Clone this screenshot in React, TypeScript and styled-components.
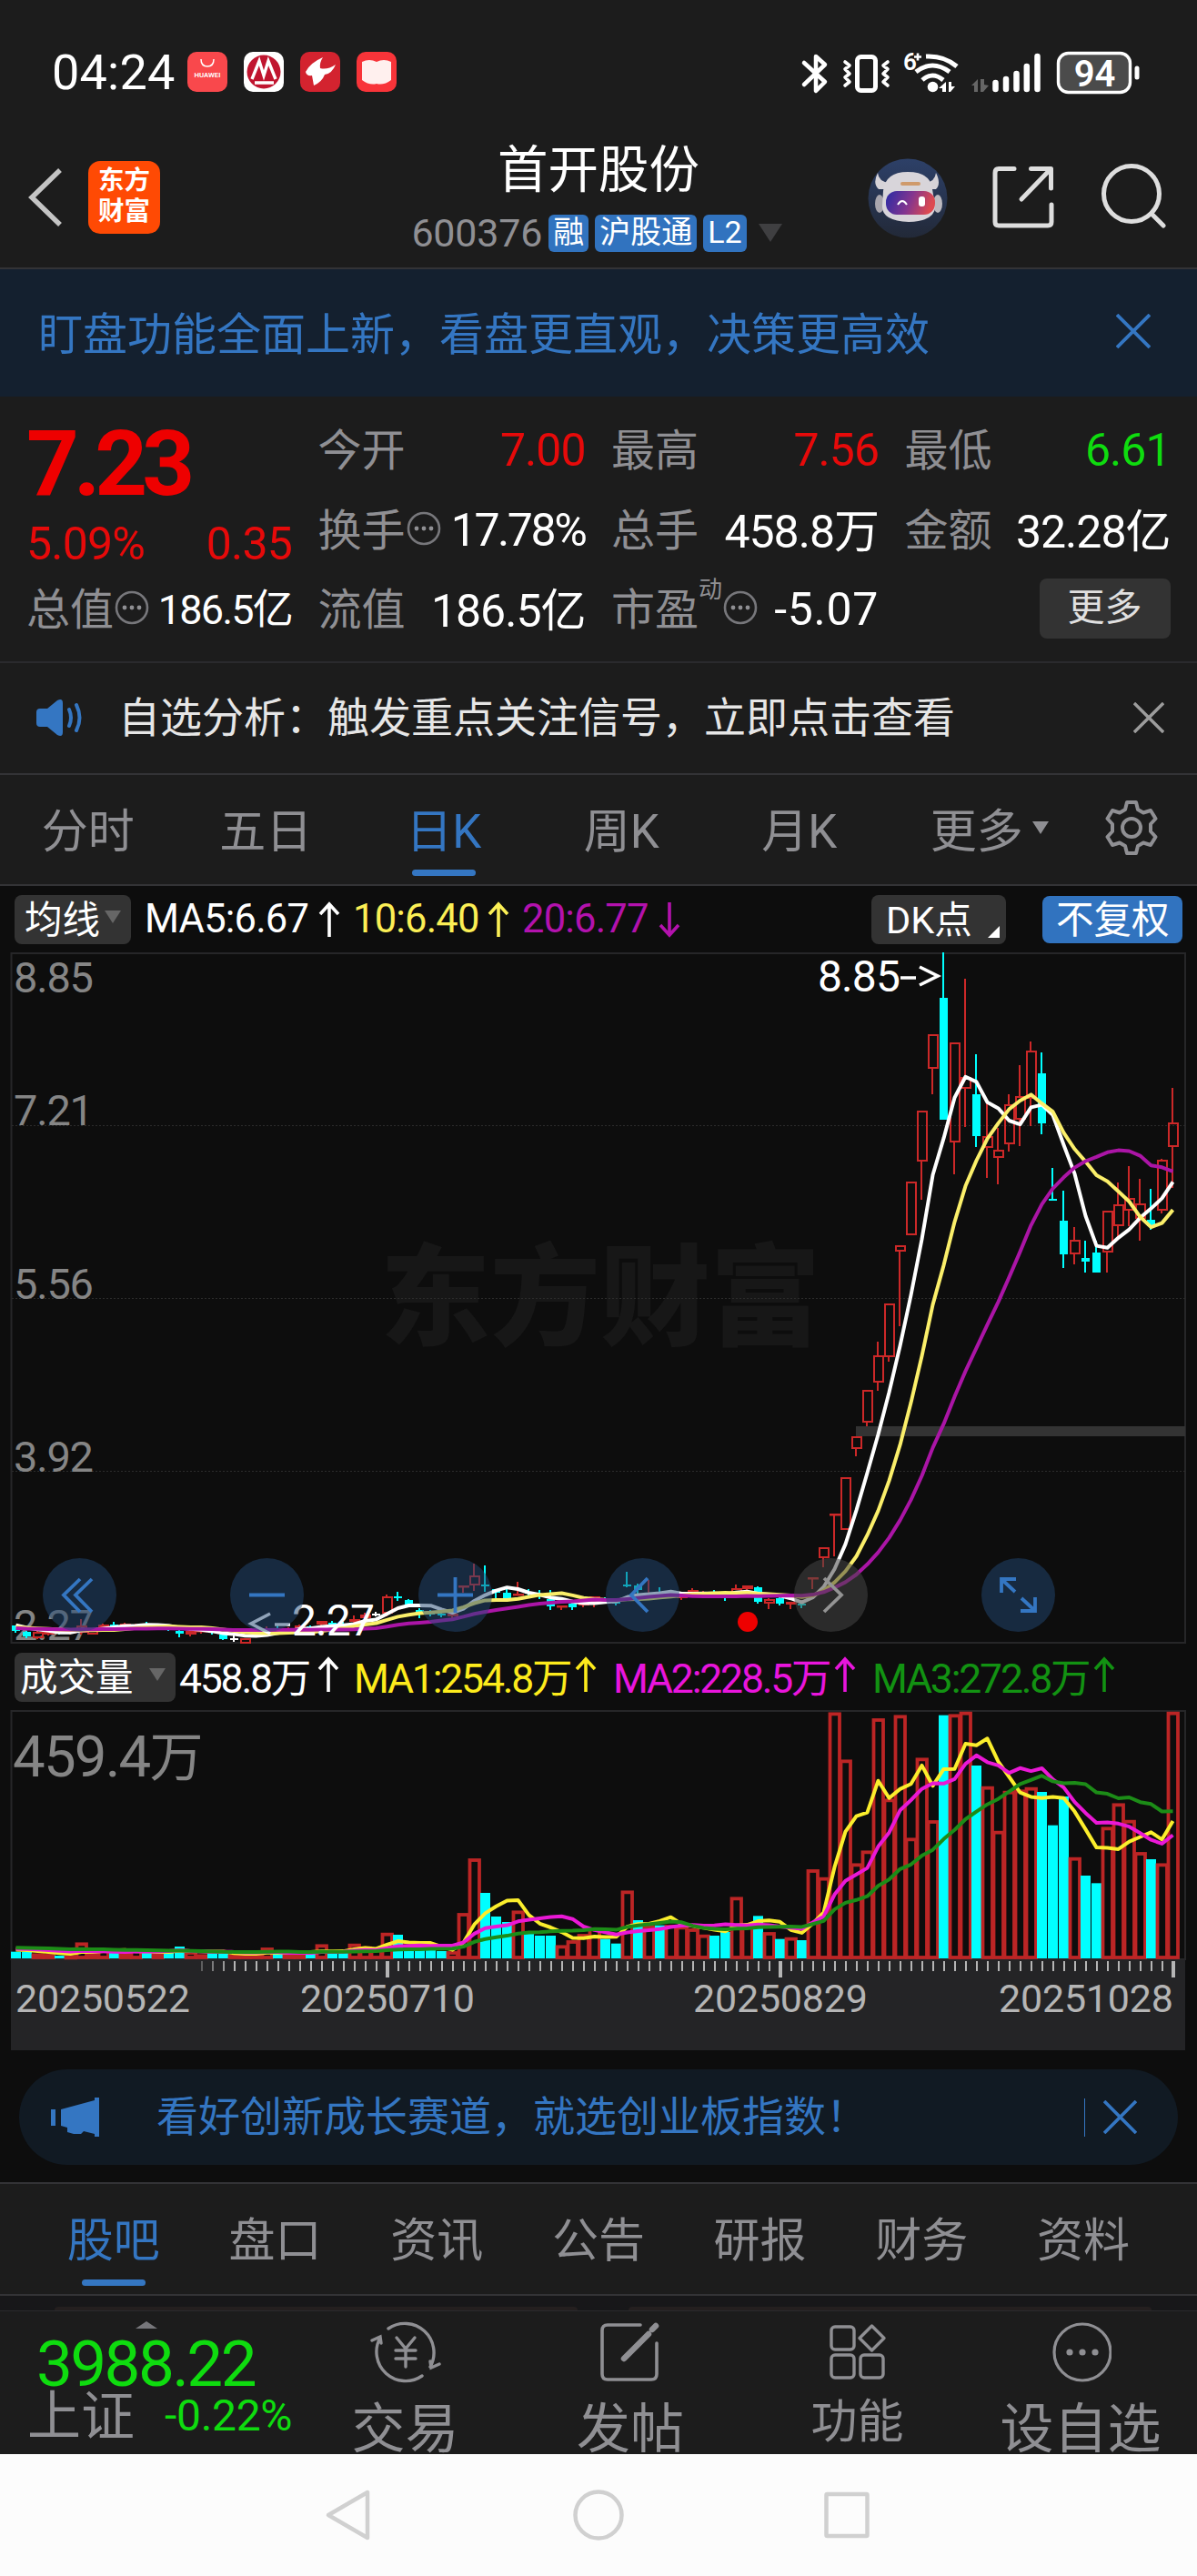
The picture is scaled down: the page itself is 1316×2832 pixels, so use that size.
import React from 'react'
import styled, { createGlobalStyle, css } from 'styled-components'

const GlobalStyle = createGlobalStyle`
  * { box-sizing: border-box; }
  body {
    margin: 0;
    background: #0d0d0d;
    font-family: Roboto, "Noto Sans CJK SC", sans-serif;
  }
  svg { display: block; flex: none; }
`;

const RED = '#e60a0a';
const GREEN = '#0fdc0f';
const BLUE = '#3476c2';
const GREY = '#8f8f93';

const Screen = styled.div`
  width: 1316px;
  height: 2832px;
  overflow: hidden;
  display: flex;
  flex-direction: column;
  background: #0d0d0d;
  white-space: nowrap;
  > * { flex: none; }
`;

/* status bar */

const StatusBar = styled.div`
  height: 158px;
  padding: 0 60px 0 57px;
  display: flex;
  align-items: center;
  background: #1c1c1c;
`;

const Clock = styled.div`
  width: 149px;
  padding-top: 2px;
  color: #fff;
  font-size: 54px;
  letter-spacing: 0.2px;
  line-height: 60px;
`;

const AppIcons = styled.div`
  display: flex;
  gap: 18px;
  flex: 1;
`;

const StatusIcons = styled.div`
  height: 46px;
`;

/* header */

const Header = styled.header`
  height: 138px;
  display: grid;
  grid-template-columns: 400px 1fr 400px;
  background: #1c1c1c;
  border-bottom: 2px solid #333336;
`;

const HeaderLeft = styled.div`
  display: flex;
  align-items: flex-start;
  padding: 19px 0 0 30px;
  gap: 27px;
`;

const Logo = styled.div`
  width: 79px;
  height: 80px;
  border-radius: 13px;
  background: #ff4a04;
  color: #fff;
  font-size: 28.5px;
  font-weight: 700;
  line-height: 34px;
  text-align: center;
  padding-top: 5px;
  white-space: normal;
`;

const HeaderTitle = styled.div`
  display: flex;
  flex-direction: column;
  align-items: center;
`;

const StockName = styled.div`
  height: 72px;
  line-height: 60px;
  font-size: 55.5px;
  color: #fff;
`;

const CodeRow = styled.div`
  display: flex;
  align-items: center;
  gap: 7px;
  height: 52px;
  padding-right: 4px;
`;

const Code = styled.span`
  font-size: 43px;
  letter-spacing: -0.2px;
  color: ${GREY};
`;

const Badge = styled.span`
  height: 41px;
  line-height: 38px;
  padding: 0 5px;
  border-radius: 6px;
  background: #3173bf;
  color: #fff;
  font-size: 34px;
`;

const Caret = styled.i<{ $size?: number; $color?: string; $up?: boolean }>`
  width: 0;
  height: 0;
  border: ${(p) => p.$size || 9}px solid transparent;
  ${(p) => p.$up
    ? css`align-self: center; border-top: 0; border-bottom: 8px solid ${p.$color || '#666'};`
    : css`border-bottom: 0; border-top: ${(p.$size || 9) * 1.6}px solid ${p.$color || '#666'};`}
`;

const CodeCaret = styled(Caret)`
  margin-left: 6px;
`;

const HeaderRight = styled.div`
  display: flex;
  align-items: flex-start;
  padding: 16px 0 0 38px;
`;

/* banners */

const Promo = styled.div`
  height: 140px;
  display: flex;
  align-items: center;
  justify-content: space-between;
  padding: 0 51px 5px 42px;
  background: #14202f;
  color: ${BLUE};
  font-size: 49px;
`;

const Notice = styled.div`
  height: 123px;
  display: flex;
  align-items: center;
  padding: 0 36px 1px 38px;
  background: #1c1c1c;
  border-bottom: 2px solid #333336;
  color: #e6e6e6;
  font-size: 46px;
`;

const NoticeText = styled.span`
  flex: 1;
  padding: 0 0 8px 38px;
`;

const IndexPromo = styled.div`
  height: 105px;
  margin: 21px 21px 19px;
  padding: 0 45px 0 34px;
  display: flex;
  align-items: center;
  border-radius: 53px;
  background: #111a23;
  color: ${BLUE};
  font-size: 46px;
`;

const IndexPromoText = styled.span`
  flex: 1;
  padding: 0 0 9px 61px;
`;

const Separator = styled.i`
  width: 1px;
  height: 42px;
  margin-right: 20px;
  background: ${BLUE};
`;

/* quote */

const Quote = styled.section`
  height: 293px;
  display: grid;
  grid-template-columns: 290px 292px 292px 290px;
  grid-template-rows: 88px 87px 87px;
  column-gap: 30.5px;
  padding: 15px 0 0 29px;
  background: #1c1c1c;
  border-bottom: 2px solid #2a2a2d;
`;

const PriceCell = styled.div`
  grid-row: span 2;
  display: flex;
  flex-direction: column;
`;

const Price = styled.div`
  height: 115px;
  line-height: 117px;
  font-size: 101px;
  font-weight: 700;
  letter-spacing: -6px;
  color: #ee0000;
`;

const Change = styled.div`
  display: flex;
  justify-content: space-between;
  margin-right: -2px;
  line-height: 65px;
  font-size: 50px;
  letter-spacing: -0.8px;
  color: ${RED};
`;

const Cell = styled.div`
  display: flex;
  align-items: center;
`;

const Label = styled.span`
  font-size: 48px;
  padding-bottom: 8px;
  color: ${GREY};
`;

const Value = styled.span<{ $color?: string; $size?: number; $spacing?: number; $unit?: boolean }>`
  margin: 0 -2px 0 auto;
  padding-bottom: ${(p) => (p.$unit ? 6 : 0)}px;
  font-size: ${(p) => p.$size || 50}px;
  letter-spacing: ${(p) => p.$spacing || -1}px;
  color: ${(p) => p.$color || '#fff'};
`;

const Sup = styled.sup`
  align-self: flex-start;
  font-size: 26px;
  line-height: 30px;
  padding-top: 7px;
  color: ${GREY};
`;

const MoreButton = styled.button`
  width: 144px;
  height: 66px;
  margin: 0 -2px 1px auto;
  padding: 0 0 3px;
  border: 0;
  border-radius: 8px;
  background: #333;
  color: #e0e0e0;
  font: inherit;
  font-size: 41px;
  line-height: 60px;
`;

/* period tabs */

const PeriodTabs = styled.nav`
  height: 122px;
  display: grid;
  grid-template-columns: repeat(6, 195.5px) 1fr;
  background: #1c1c1c;
  border-bottom: 2px solid #333336;
`;

const Tab = styled.div<{ $active?: boolean; $indent?: number }>`
  position: relative;
  display: flex;
  align-items: center;
  justify-content: center;
  gap: 10px;
  padding: 0 2px 5px ${(p) => p.$indent || 0}px;
  font-size: 51px;
  color: ${(p) => (p.$active ? BLUE : GREY)};
  ${(p) => p.$active && css`
    &::after {
      content: '';
      position: absolute;
      bottom: 9px;
      left: calc(50% - 36px);
      width: 70px;
      height: 7px;
      border-radius: 4px;
      background: ${BLUE};
    }
  `}
`;

/* indicators */

const IndicatorRow = styled.div`
  height: 73px;
  display: flex;
  align-items: center;
  padding: 0 16px;
`;

const Chip = styled.div<{ $width: number; $indent: number; $blue?: boolean }>`
  position: relative;
  width: ${(p) => p.$width}px;
  height: ${(p) => (p.$blue ? 52 : 54)}px;
  display: flex;
  align-items: center;
  justify-content: space-between;
  padding: 0 11px 6px ${(p) => p.$indent}px;
  border-radius: 8px;
  background: ${(p) => (p.$blue ? '#3173bf' : '#333')};
  color: #fff;
  font-size: 41.5px;
  ${(p) => p.$blue && css`margin-left: 40px;`}
`;

const Corner = styled.i`
  position: absolute;
  right: 7px;
  bottom: 7px;
  border-left: 13px solid transparent;
  border-bottom: 13px solid #fff;
`;

const Spacer = styled.div`
  flex: 1;
`;

const Reading = styled.div<{ $width: number; $color: string; $gap: number; $unit?: boolean }>`
  display: flex;
  align-items: center;
  justify-content: space-between;
  width: ${(p) => p.$width}px;
  margin-left: ${(p) => p.$gap}px;
  padding-bottom: ${(p) => (p.$unit ? 5 : 0)}px;
  color: ${(p) => p.$color};
  font-size: ${(p) => (p.$unit ? 44.5 : 43.5)}px;
  letter-spacing: ${(p) => (p.$unit ? -2.2 : -0.8)}px;
`;

/* charts */

const PriceChart = styled.div`
  position: relative;
  height: 760px;
`;

const ChartButton = styled.div<{ $index: number; $muted?: boolean }>`
  position: absolute;
  top: 666px;
  left: ${(p) => 47 + p.$index * 206.4}px;
  width: 81px;
  height: 81px;
  border-radius: 50%;
  background: ${(p) => (p.$muted ? 'rgba(70, 70, 70, 0.55)' : 'rgba(33, 72, 116, 0.5)')};
`;

const Axis = styled.div`
  margin: 0 13px 0 12px;
  height: 99px;
  background: #242426;
`;

const Dates = styled.div`
  display: flex;
  padding: 1px 14px 0 5px;
  color: #b5b5b5;
  font-size: 43px;
  line-height: 44px;
  letter-spacing: -0.2px;
`;

const DateLabel = styled.span<{ $gap?: number }>`
  width: 191px;
  margin-left: ${(p) => p.$gap || 0}px;
`;

/* bottom */

const SectionTabs = styled.nav`
  height: 125px;
  display: grid;
  grid-template-columns: repeat(7, 177.7px);
  padding: 0 37px;
  background: #1c1c1c;
  border-top: 2px solid #333336;
  border-bottom: 2px solid #333336;
`;

const CardStrip = styled.div`
  height: 16px;
  display: flex;
  justify-content: space-between;
  align-items: flex-end;
  padding: 0 50px 0 60px;
  background: #171719;
`;

const CardEdge = styled.div`
  width: 575px;
  height: 4px;
  border-radius: 12px 12px 0 0;
  background: #241f1f;
`;

const BottomBar = styled.footer`
  height: 158px;
  overflow: hidden;
  display: grid;
  grid-template-columns: 330px 231px 264px 235px 1fr;
  background: #1c1c1c;
  border-top: 1px solid #2a2a2d;
`;

const IndexQuote = styled.div`
  display: flex;
  flex-direction: column;
  padding: 11px 38px 0 30px;
`;

const IndexValue = styled.div`
  height: 75px;
  line-height: 77px;
  padding-left: 10px;
  font-size: 71px;
  letter-spacing: -2.6px;
  color: ${GREEN};
`;

const IndexChange = styled.div`
  display: flex;
  align-items: center;
  gap: 33px;
  height: 54px;
  margin-top: -7px;
  font-size: 48px;
  letter-spacing: -0.3px;
  color: ${GREEN};
`;

const IndexName = styled.span`
  padding-bottom: 7px;
  font-size: 59px;
  color: ${GREY};
  letter-spacing: 0;
`;

const Action = styled.div<{ $size?: number }>`
  display: flex;
  flex-direction: column;
  align-items: center;
  padding-top: 11px;
  font-size: ${(p) => p.$size || 59}px;
  line-height: ${(p) => (p.$size ? 86 : 101)}px;
  color: ${GREY};
`;

const NavBar = styled.div`
  height: 134px;
  background: #fcfcfc;
`;

/* icons */

const Cross = ({ size, color }: { size: number; color: string }): JSX.Element => (
  <svg width={size} height={size} viewBox="0 0 36 36" stroke={color} strokeWidth="3.6">
    <path d="M1 1L35 35M35 1L1 35" />
  </svg>
);

const Arrow = ({ down }: { down?: boolean }): JSX.Element => (
  <svg width="24" height="40" viewBox="0 0 24 40" fill="none" stroke="currentColor" strokeWidth="3.6">
    <path d={down ? 'M12 1V36M2 26L12 37L22 26' : 'M12 39V4M2 14L12 3L22 14'} />
  </svg>
);

const Dots = (): JSX.Element => (
  <svg width="40" height="44" viewBox="0 0 40 44" fill={GREY}>
    <circle cx="20" cy="20" r="17" fill="none" stroke="#77777b" strokeWidth="2.6" />
    <circle cx="12" cy="20" r="2.4" />
    <circle cx="20" cy="20" r="2.4" />
    <circle cx="28" cy="20" r="2.4" />
  </svg>
);

const StatusGlyphs = (): JSX.Element => (
  <svg width="376" height="50" viewBox="880 54 376 50" fill="none" stroke="#fff">
    <path d="M884 67L907 88L897 98V60L907 69L884 91" strokeWidth="4.5" strokeLinejoin="round" strokeLinecap="round" />
    <rect x="942.5" y="60.500" width="20" height="37" rx="4" strokeWidth="5" />
    <path d="M929 66l5 4l-5 4l5 5l-5 4l5 5l-5 4M976 66l-5 4l5 4l-5 5l5 4l-5 5l5 4" strokeWidth="3.6" strokeLinejoin="round" strokeLinecap="round" />
    <g strokeWidth="5">
      <path d="M1018 60Q1038 59 1052 71" />
      <path d="M1007 77Q1025 63 1044 77" />
      <path d="M1014 86Q1025 76 1037 86" />
    </g>
    <circle cx="1025.500" cy="93.500" r="5.800" fill="#fff" stroke="none" />
    <path d="M1032 95l8-7v11h-4v-4zM1050 93l-5 6h-2V88h3v5z" fill="#fff" stroke="none" />
    <path d="M1068 92l7-7v14h-4v-7zM1087 92l-6 7h-3V85h4v6z" fill="#666" stroke="none" />
    <g strokeWidth="6.5" strokeLinecap="round">
      <path d="M1094.500 89V96M1106 85V96M1117.500 79V96M1128.800 71V96M1140.500 60V96" />
    </g>
    <text x="993" y="75" fontSize="26" fontWeight="600" fill="#fff" stroke="none">6</text>
    <path d="M1005 60.500H1013M1009 56.500V64.500" strokeWidth="2.600" />
    <rect x="1163.500" y="56.500" width="79" height="43" rx="11" fill="#4b4b4b" strokeWidth="3.400" />
    <path d="M1250 73V83" strokeWidth="5" strokeLinecap="round" />
    <text x="1203.500" y="92.500" fontSize="40" fontWeight="600" fill="#fff" stroke="none" textAnchor="middle">94</text>
  </svg>
);

const Robot = (): JSX.Element => (
  <svg width="88" height="88" viewBox="0 0 88 88">
    <defs>
      <linearGradient id="sky" x1="0" y1="0" x2="0" y2="1">
        <stop offset="0" stopColor="#2d4068" />
        <stop offset="1" stopColor="#222938" />
      </linearGradient>
      <linearGradient id="visor" x1="0" y1="0" x2="1" y2="0.2">
        <stop offset="0" stopColor="#2a2ba5" />
        <stop offset="0.55" stopColor="#83358f" />
        <stop offset="1" stopColor="#dd4a50" />
      </linearGradient>
    </defs>
    <circle cx="44" cy="44" r="43.500" fill="url(#sky)" />
    <path d="M11 16Q5 28 12 34L21 34L24 27Q12 26 11 16ZM75 16Q81 28 75 34L67 34L63 27Q74 26 75 16Z" fill="#d6d3d8" />
    <ellipse cx="13" cy="50" rx="5" ry="10" fill="#a9a6ae" />
    <ellipse cx="77" cy="50" rx="5" ry="10" fill="#bdbac0" />
    <path d="M17 36Q19 15 44 15Q69 15 71 34L74 52Q75 69 45 70Q15 69 16 52Z" fill="#d8d5da" />
    <rect x="36" y="26" width="22" height="4" rx="2" fill="#cf9a6c" />
    <rect x="20" y="36" width="54" height="26" rx="12" fill="url(#visor)" />
    <path d="M33 51Q38 43 43 51" fill="none" stroke="#fff" strokeWidth="2" />
    <rect x="56" y="42" width="7" height="11" rx="3" fill="#fff" />
  </svg>
);

const Gear = (): JSX.Element => (
  <svg width="62" height="62" viewBox="0 0 62 62" fill="none" stroke={GREY} strokeWidth="4" strokeLinejoin="round">
    <path d="M26 3H36L38 11L44 14.500L52 12L57.500 21L52 27V35L57.500 41L52 50L44 47.500L38 51L36 59H26L24 51L18 47.500L10 50L4.500 41L10 35V27L4.500 21L10 12L18 14.500L24 11Z" />
    <circle cx="31" cy="31" r="10" />
  </svg>
);

/* chart data, in thirds of a pixel: direction, high, body top, body bottom, low */

type Candle = [string, number, number, number, number];

const quiet: Candle[] = [
  ['d', 320, 322, 340, 346], ['d', 338, 342, 358, 362], ['u', 340, 343, 362, 367], ['u', 335, 340, 350, 355],
  ['d', 328, 340, 345, 350], ['u', 340, 340, 346, 350], ['u', 300, 322, 346, 350], ['u', 330, 335, 350, 352],
  ['u', 315, 318, 330, 337], ['d', 308, 317, 321, 328], ['u', 312, 316, 320, 330], ['u', 315, 318, 322, 328],
  ['d', 308, 318, 322, 328], ['u', 318, 320, 326, 330], ['d', 320, 324, 334, 338], ['d', 330, 338, 348, 360],
  ['u', 335, 338, 352, 357], ['u', 335, 336, 340, 348], ['d', 338, 340, 346, 350], ['d', 345, 350, 366, 370],
  ['w', 350, 363, 367, 375], ['u', 362, 362, 380, 382], ['u', 340, 342, 348, 355], ['u', 325, 330, 336, 340],
  ['d', 318, 330, 334, 340], ['u', 328, 332, 336, 340], ['u', 318, 322, 335, 340], ['d', 320, 325, 335, 340],
  ['u', 305, 306, 318, 322], ['d', 305, 312, 318, 325], ['d', 310, 316, 322, 326], ['u', 288, 300, 308, 315],
  ['u', 280, 284, 298, 300], ['w', 275, 281, 286, 292], ['u', 220, 224, 282, 292], ['d', 210, 224, 228, 240],
  ['d', 234, 238, 254, 262], ['d', 265, 270, 285, 298], ['d', 270, 280, 284, 290], ['d', 275, 283, 288, 293],
  ['u', 280, 283, 290, 297], ['u', 190, 190, 195, 213], ['u', 118, 157, 190, 208], ['d', 123, 185, 190, 210],
  ['d', 200, 202, 213, 230], ['d', 200, 212, 230, 236], ['u', 177, 215, 220, 222], ['d', 200, 210, 215, 225],
  ['d', 205, 215, 222, 235], ['d', 205, 235, 258, 270], ['u', 255, 255, 262, 270], ['d', 240, 248, 260, 270],
  ['u', 235, 240, 255, 262], ['u', 225, 226, 246, 262], ['d', 228, 234, 238, 245], ['d', 235, 242, 246, 255],
  ['d', 145, 186, 190, 195], ['d', 183, 190, 205, 215], ['u', 170, 212, 218, 225], ['d', 196, 213, 218, 222],
  ['d', 215, 216, 222, 228], ['u', 218, 222, 230, 237], ['u', 197, 205, 215, 220], ['u', 208, 210, 216, 222],
  ['d', 203, 214, 220, 222], ['d', 218, 222, 232, 241], ['u', 186, 197, 212, 220], ['u', 190, 190, 202, 215],
  ['d', 192, 196, 244, 250], ['u', 232, 235, 250, 266], ['d', 228, 230, 248, 255],
];

const rally: Candle[] = [
  ['u', 2192, 2192, 2202, 2216], ['d', 2198, 2198, 2205, 2213], ['u', 2113, 2113, 2116, 2150], ['u', 2012, 2012, 2048, 2080],
  ['u', 1902, 1902, 1905, 2043], ['u', 1781, 1781, 1955, 1955], ['u', 1646, 1646, 1690, 1713], ['u', 1495, 1495, 1603, 1615],
  ['u', 1335, 1381, 1470, 1497], ['u', 1209, 1209, 1386, 1402], ['u', 1018, 1018, 1038, 1283], ['u', 806, 806, 985, 985],
  ['u', 573, 573, 741, 867], ['u', 321, 321, 434, 519], ['d', 51, 200, 602, 602], ['u', 348, 348, 677, 783],
  ['u', 138, 463, 501, 627], ['d', 387, 519, 657, 693], ['u', 550, 657, 696, 795], ['u', 630, 702, 729, 815],
  ['u', 519, 553, 683, 707], ['u', 423, 525, 604, 690], ['u', 346, 376, 535, 623], ['d', 381, 450, 615, 651],
  ['d', 762, 863, 869, 869], ['d', 836, 936, 1046, 1092], ['u', 957, 1000, 1047, 1080], ['d', 1003, 1058, 1070, 1106],
  ['d', 1003, 1040, 1106, 1106], ['u', 903, 903, 1041, 1106], ['u', 811, 882, 955, 990], ['u', 756, 861, 902, 953],
  ['u', 797, 880, 930, 1002], ['d', 831, 934, 955, 965], ['u', 733, 735, 903, 911], ['u', 499, 612, 693, 828],
];

const shift = (rows: Candle[], by: number): Candle[] =>
  rows.map(([dir, ...v]) => [dir, ...v.map((n) => Math.round((n + by) / 3))] as Candle);

const candles = [...shift(quiet, 1899), ...shift(rally, -51)];

const volumes = [
  25, 25, 20, 18, 12, 14, 56, 22, 32, 22, 22, 34, 22, 22, 22, 42, 27, 17, 20, 20, 17, 17, 17, 39, 20, 20, 20, 20, 50,
  22, 22, 52, 43, 35, 88, 81, 32, 34, 34, 27, 27, 153, 333, 219, 141, 123, 161, 85, 78, 78, 47, 63, 84, 105, 67, 52,
  227, 129, 112, 112, 114, 110, 102, 82, 78, 90, 206, 112, 143, 90, 67, 73, 63, 297, 271, 815, 659, 317, 359, 795,
  530, 806, 401, 665, 459, 805, 809, 817, 639, 571, 424, 556, 560, 568, 552, 442, 537, 337, 276, 251, 437, 515, 460,
  354, 330, 317, 817,
].map((v) => v / 3);

// days whose volume bar is red although the candle closed below its open
const redVolume = [51, 56, 60];

const xAt = (i: number): number => 17.5 + i * 12;

const average = (values: number[], days: number, before: number): string =>
  values.map((_, i) => {
    let sum = 0;
    for (let k = i - days + 1; k <= i; k++) sum += k < 0 ? before : values[k];
    return `${xAt(i)},${(sum / days).toFixed(1)}`;
  }).join(' ');

const closes = candles.map(([dir, , top, bottom]) => (dir === 'd' ? bottom : top));
const volumeTops = volumes.map((v) => 274 - v);

const Line = ({ points, color }: { points: string; color: string }): JSX.Element => (
  <polyline points={points} fill="none" stroke={color} strokeWidth="4" strokeLinejoin="round" />
);

const CandleChart = (): JSX.Element => (
  <svg width="1316" height="760" viewBox="0 0 1316 760">
    <text x="660" y="422" fontSize="121" fontWeight="900" fill="#171717" textAnchor="middle">东方财富</text>
    <path d="M12.500 1H1303V759H12.500Z" fill="none" stroke="#262628" strokeWidth="2" />
    {[190, 380, 570].map((y) => (
      <path key={y} d={`M13 ${y + 0.5}H1303`} stroke="#2c2c2c" strokeDasharray="2 2" />
    ))}
    <rect x="941" y="521" width="362" height="11" fill="#333" />
    <g fontSize="47" fill="#858585" letterSpacing="-1.2">
      <text x="15" y="44">8.85</text>
      <text x="15" y="190">7.21</text>
      <text x="15" y="381">5.56</text>
      <text x="15" y="571">3.92</text>
      <text x="15" y="756">2.27</text>
    </g>
    {candles.map(([dir, high, top, bottom, low], i) => {
      const x = xAt(i);
      if (dir === 'u') {
        return (
          <g key={i} fill="none" stroke="#cc2828" strokeWidth="2">
            <path d={`M${x - 0.5} ${high}V${top}M${x - 0.5} ${bottom}V${low}`} />
            <rect x={x - 4.5} y={top + 1} width="10" height={Math.max(bottom - top - 2, 0.5)} />
          </g>
        );
      }
      const color = dir === 'w' ? '#fff' : '#00ffff';
      return (
        <g key={i}>
          <path d={`M${x - 0.5} ${high}V${low}`} stroke={color} strokeWidth="2" />
          <rect x={x - 4.5} y={top} width="9" height={Math.max(bottom - top, 2)} fill={color} />
        </g>
      );
    })}
    <Line points={average(closes, 5, 738)} color="#fff" />
    <Line points={average(closes, 10, 741)} color="#fbef6a" />
    <Line points={average(closes, 20, 743)} color="#ab15a6" />
    <g fontSize="48" fill="#fff" letterSpacing="-0.9">
      <text x="899" y="43">8.85</text>
      <text x="321" y="751">2.27</text>
    </g>
    <g fill="none" stroke="#fff" strokeWidth="3.6">
      <path d="M990 28H1007M1011 16L1031 26L1011 36" />
      <path d="M319 739H302M297 727L276 738L297 749" />
    </g>
    <circle cx="822" cy="736" r="11" fill="#ee0000" />
  </svg>
);

const VolumeChart = (): JSX.Element => (
  <svg width="1316" height="275" viewBox="0 0 1316 275">
    <path d="M12.500 1H1303V274H12.500Z" fill="none" stroke="#262628" strokeWidth="2" />
    <text x="14" y="73" fontSize="63.500" fill="#858585" letterSpacing="-1.800">459.4<tspan fontSize="59">万</tspan></text>
    {volumes.map((v, i) => (
      candles[i][0] !== 'd' || redVolume.includes(i)
        ? <rect key={i} x={xAt(i) - 5} y={276 - v} width="10.5" height={Math.max(v - 4, 1)} fill="none" stroke="#bc2525" strokeWidth="3.8" />
        : <rect key={i} x={xAt(i) - 5.5} y={274 - v} width="11" height={v - 1} fill="#00ffff" />
    ))}
    <Line points={average(volumeTops, 5, 263)} color="#fbee2c" />
    <Line points={average(volumeTops, 10, 262)} color="#ea18d6" />
    <Line points={average(volumeTops, 20, 261)} color="#1c8c17" />
  </svg>
);

const Ticks = (): JSX.Element => (
  <svg width="1291" height="19" viewBox="12 0 1291 19" stroke="#b5b5b5">
    {volumes.map((_, i) => {
      const major = i === 34 || i === 70 || i === 106;
      return i > 16 && (
        <path key={i} d={`M${xAt(i) + 0.5} 1V${major ? 19 : 12}`} strokeWidth={major ? 4 : 2} opacity={Math.min(1, (i - 15) / 5)} />
      );
    })}
  </svg>
);

const buttonPaths = [
  'M41 23L23 40.500L41 59M54 23L36 40.500L54 59',
  'M21 40.500H60',
  'M21 40.500H60M40.500 21V60',
  'M46 22L28 40.500L46 59',
  'M33 22L52 40.500L33 59',
  'M22 38V23H38M23 24L37 37M59 43V58H43M58 57L44 44',
];

const sections = ['股吧', '盘口', '资讯', '公告', '研报', '财务', '资料'];

const App = (): JSX.Element => (
  <Screen>
    <GlobalStyle />
    <StatusBar>
      <Clock>04:24</Clock>
      <AppIcons>
        <svg width="44" height="44" viewBox="0 0 44 44">
          <rect width="44" height="44" rx="10" fill="#f9484c" />
          <path d="M15 8Q15 16 22 16Q29 16 29 8" fill="none" stroke="#fff" strokeWidth="1.500" />
          <text x="22" y="28" fontSize="7.800" fontWeight="600" fill="#fff" textAnchor="middle">HUAWEI</text>
        </svg>
        <svg width="44" height="44" viewBox="0 0 44 44" fill="none">
          <rect width="44" height="44" rx="10" fill="#fff" />
          <circle cx="22" cy="22" r="18.500" fill="#c0152f" />
          <path d="M9 30L17 10L22 26L27 10L35 30M12 34H33" stroke="#fff" strokeWidth="3.400" />
        </svg>
        <svg width="44" height="44" viewBox="0 0 44 44">
          <rect width="44" height="44" rx="10" fill="#d3232f" />
          <path d="M25 6Q11 12 6 22Q7 27 13 26L15 37Q24 33 27 25Q35 24 39 14Q30 20 22 18Q21 12 25 6Z" fill="#fff" />
        </svg>
        <svg width="44" height="44" viewBox="0 0 44 44">
          <rect width="44" height="44" rx="10" fill="#f83439" />
          <path d="M6 11Q14 7 22 11Q30 7 38 11V31Q30 37 22 35Q14 37 6 31Z" fill="#fff0ee" />
        </svg>
      </AppIcons>
      <StatusIcons><StatusGlyphs /></StatusIcons>
    </StatusBar>

    <Header>
      <HeaderLeft>
        <svg width="40" height="80" viewBox="0 0 40 80" fill="none" stroke="#c4c4c4" strokeWidth="5.500">
          <path d="M36 10L5 40L36 70" />
        </svg>
        <Logo>东方<br />财富</Logo>
      </HeaderLeft>
      <HeaderTitle>
        <StockName>首开股份</StockName>
        <CodeRow>
          <Code>600376</Code>
          <Badge>融</Badge>
          <Badge>沪股通</Badge>
          <Badge>L2</Badge>
          <CodeCaret $size={13} $color="#3f3f41" />
        </CodeRow>
      </HeaderTitle>
      <HeaderRight>
        <Robot />
        <svg width="250" height="88" viewBox="1042 174 250 88" fill="none" stroke="#dedede" strokeWidth="5" strokeLinecap="round" strokeLinejoin="round">
          <path d="M1115 185.500H1098Q1094 185.500 1094 190V244Q1094 248 1098 248H1152Q1156 248 1156 244V225M1133.500 185.500H1155.500V207M1153 188L1123 219" />
          <circle cx="1244" cy="213" r="30.500" />
          <path d="M1266 235L1279 248" />
        </svg>
      </HeaderRight>
    </Header>

    <Promo>
      <span>盯盘功能全面上新，看盘更直观，决策更高效</span>
      <Cross size={38} color={BLUE} />
    </Promo>

    <Quote>
      <PriceCell>
        <Price>7.23</Price>
        <Change><span>5.09%</span><span>0.35</span></Change>
      </PriceCell>
      <Cell><Label>今开</Label><Value $color={RED}>7.00</Value></Cell>
      <Cell><Label>最高</Label><Value $color={RED}>7.56</Value></Cell>
      <Cell><Label>最低</Label><Value $color={GREEN}>6.61</Value></Cell>
      <Cell><Label>换手</Label><Dots /><Value $spacing={-2.4}>17.78%</Value></Cell>
      <Cell><Label>总手</Label><Value $unit>458.8万</Value></Cell>
      <Cell><Label>金额</Label><Value $unit>32.28亿</Value></Cell>
      <Cell><Label>总值</Label><Dots /><Value $unit $size={45} $spacing={-1.8}>186.5亿</Value></Cell>
      <Cell><Label>流值</Label><Value $unit>186.5亿</Value></Cell>
      <Cell><Label>市盈</Label><Sup>动</Sup><Dots /><Value $spacing={0.7}>-5.07</Value></Cell>
      <Cell><MoreButton>更多</MoreButton></Cell>
    </Quote>

    <Notice>
      <svg width="54" height="44" viewBox="0 0 54 44" fill="none" stroke={BLUE} strokeWidth="4" strokeLinecap="round">
        <path d="M6 12H14L25 3Q31 0 31 6V38Q31 44 25 41L14 32H6Q2 32 2 28V16Q2 12 6 12Z" fill={BLUE} stroke="none" />
        <path d="M38 13Q42 22 38 31M46 8Q53 22 46 36" />
      </svg>
      <NoticeText>自选分析：触发重点关注信号，立即点击查看</NoticeText>
      <Cross size={34} color="#9c9c9c" />
    </Notice>

    <PeriodTabs>
      <Tab>分时</Tab>
      <Tab>五日</Tab>
      <Tab $active>日K</Tab>
      <Tab>周K</Tab>
      <Tab>月K</Tab>
      <Tab $indent={27}>更多<Caret $color={GREY} /></Tab>
      <Tab><Gear /></Tab>
    </PeriodTabs>

    <IndicatorRow>
      <Chip $width={128} $indent={11}>均线<Caret /></Chip>
      <Reading $width={215} $gap={15} $color="#fff">MA5:6.67<Arrow /></Reading>
      <Reading $width={172} $gap={14} $color="#fbef55">10:6.40<Arrow /></Reading>
      <Reading $width={174} $gap={14} $color="#b312ad">20:6.77<Arrow down /></Reading>
      <Spacer />
      <Chip $width={148} $indent={16}>DK点<Corner /></Chip>
      <Chip $width={154} $indent={15} $blue>不复权</Chip>
    </IndicatorRow>

    <PriceChart>
      <CandleChart />
      {buttonPaths.map((d, i) => (
        <ChartButton key={i} $index={i} $muted={i === 4}>
          <svg width="81" height="81" viewBox="0 0 81 81" fill="none" stroke={i === 4 ? '#939393' : BLUE} strokeWidth="3.8">
            <path d={d} />
          </svg>
        </ChartButton>
      ))}
    </PriceChart>

    <IndicatorRow>
      <Chip $width={177} $indent={6}>成交量<Caret /></Chip>
      <Reading $width={176} $gap={4} $unit $color="#fff">458.8万<Arrow /></Reading>
      <Reading $width={267} $gap={16} $unit $color="#fdeb1c">MA1:254.8万<Arrow /></Reading>
      <Reading $width={267} $gap={18} $unit $color="#e815dc">MA2:228.5万<Arrow /></Reading>
      <Reading $width={267} $gap={18} $unit $color="#129212">MA3:272.8万<Arrow /></Reading>
    </IndicatorRow>

    <VolumeChart />
    <Axis>
      <Ticks />
      <Dates>
        <DateLabel>20250522</DateLabel>
        <DateLabel $gap={122}>20250710</DateLabel>
        <DateLabel $gap={241}>20250829</DateLabel>
        <DateLabel $gap={145}>20251028</DateLabel>
      </Dates>
    </Axis>

    <IndexPromo>
      <svg width="56" height="46" viewBox="0 0 56 44" fill={BLUE}>
        <path d="M1 13H6V31H1ZM12 13L49 3V0H54V43H49V40L37 37L34 40H26L19 38V33L12 31Z" />
      </svg>
      <IndexPromoText>看好创新成长赛道，就选创业板指数！</IndexPromoText>
      <Separator />
      <Cross size={37} color={BLUE} />
    </IndexPromo>

    <SectionTabs>
      {sections.map((name, i) => <Tab key={name} $active={i === 0}>{name}</Tab>)}
    </SectionTabs>
    <CardStrip><CardEdge /><CardEdge /></CardStrip>

    <BottomBar>
      <IndexQuote>
        <Caret $up $size={12} $color="#77777b" />
        <IndexValue>3988.22</IndexValue>
        <IndexChange><IndexName>上证</IndexName>-0.22%</IndexChange>
      </IndexQuote>
      <Action>
        <svg width="78" height="68" viewBox="0 0 78 68" fill="none" stroke={GREY} strokeWidth="3.4" strokeLinecap="round">
          <path d="M20 8A32 32 0 0 1 66 50M57 60A32 32 0 0 1 11 18M2 21L11 17L12 24M76 47L67 51L66 44" />
          <path d="M29 18L39 30L49 18M39 30V50M28 32H50M28 41H50" />
        </svg>
        交易
      </Action>
      <Action>
        <svg width="68" height="68" viewBox="0 0 68 68" fill="none" stroke={GREY} strokeWidth="3.6" strokeLinecap="round">
          <path d="M45 4H9Q3 4 3 10V58Q3 64 9 64H57Q63 64 63 58V24" />
          <path d="M58 9L62 5M54 14L27 41" strokeWidth="6.5" />
        </svg>
        发帖
      </Action>
      <Action $size={51}>
        <svg width="68" height="68" viewBox="0 0 68 68" fill="none" stroke={GREY} strokeWidth="3.4" strokeLinejoin="round">
          <rect x="5" y="6" width="25" height="25" rx="4" />
          <rect x="5" y="37" width="25" height="25" rx="4" />
          <rect x="37" y="37" width="25" height="25" rx="4" />
          <path d="M49.500 5L63 18.500L49.500 32L36 18.500Z" />
        </svg>
        功能
      </Action>
      <Action>
        <svg width="68" height="68" viewBox="-2 0 68 68" fill={GREY}>
          <circle cx="34" cy="34" r="31" fill="none" stroke={GREY} strokeWidth="3.2" />
          <circle cx="20" cy="34" r="3.6" />
          <circle cx="34" cy="34" r="3.6" />
          <circle cx="48" cy="34" r="3.6" />
        </svg>
        设自选
      </Action>
    </BottomBar>

    <NavBar>
      <svg width="1316" height="134" viewBox="0 0 1316 134" fill="none" stroke="#d0d0d0" strokeWidth="4.5" strokeLinejoin="round">
        <path d="M404 42V92L361 67Z" />
        <circle cx="658" cy="67" r="25.500" />
        <rect x="908.500" y="44" width="45" height="46" rx="1" />
      </svg>
    </NavBar>
  </Screen>
);

export default App;
